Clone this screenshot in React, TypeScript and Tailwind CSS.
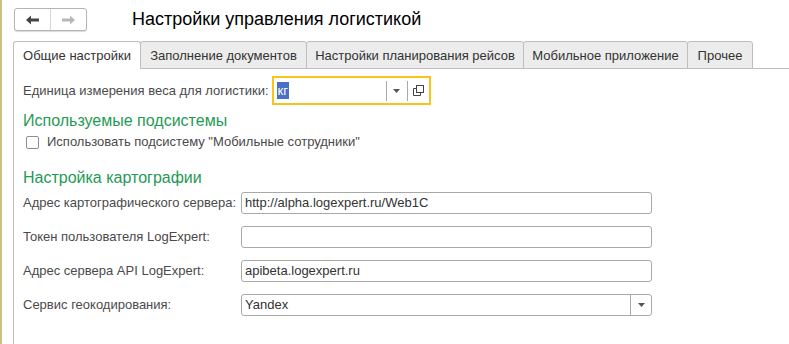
import React from "react";

const font = { fontFamily: '"Liberation Sans", Arial, sans-serif' };

function Field({ label, value, select }: { label: string; value?: string; select?: boolean }) {
  return (
    <div className="flex h-[22px] items-center">
      <div className="w-[218px] shrink-0 text-[13px] text-[#4a4a4a]">{label}</div>
      <div className="flex h-[22px] w-[411px] items-center rounded-[3px] border border-[#a9a9a9] bg-white">
        <div className="flex-1 pl-[3px] text-[13px] text-[#333]">{value}</div>
        {select && (
          <div className="flex h-full w-[21px] items-center justify-center border-l border-[#a9a9a9]">
            <svg width="7" height="4" viewBox="0 0 7 4">
              <path d="M0 0h7L3.5 4z" fill="#555" />
            </svg>
          </div>
        )}
      </div>
    </div>
  );
}

export default function App() {
  const tabs = ["Общие настройки", "Заполнение документов", "Настройки планирования рейсов", "Мобильное приложение", "Прочее"];
  const widths = ["w-[128px]", "w-[167px]", "w-[218px]", "w-[165px]", "w-[66px]"];

  return (
    <div className="flex h-[344px] w-[789px] overflow-hidden bg-white" style={font}>
      <div className="w-[2px] shrink-0 bg-[#cdbf85]" />
      <div className="flex flex-1 flex-col pl-[11px]">
        {/* top bar */}
        <div className="flex h-[41px] items-start pt-[8px]">
          <div className="ml-[1px] flex h-[23px] w-[73px] rounded-[3px] border border-[#b5b5b5] bg-white shadow-[0_1px_1px_rgba(0,0,0,0.15)]">
            <div className="flex w-[36px] items-center justify-center border-r border-[#d6d6d6]">
              <svg width="13" height="10" viewBox="0 0 13 10">
                <path d="M0 5L5 0.5V3.5H13V6.5H5V9.5Z" fill="#444" />
              </svg>
            </div>
            <div className="flex flex-1 items-center justify-center">
              <svg width="13" height="10" viewBox="0 0 13 10">
                <path d="M13 5L8 0.5V3.5H0V6.5H8V9.5Z" fill="#b8b8b8" />
              </svg>
            </div>
          </div>
          <div className="ml-[45px] mt-[-1px] text-[18px] leading-[24px] text-black">Настройки управления логистикой</div>
        </div>

        {/* tabs */}
        <div className="flex h-[28px] items-end">
          {tabs.map((t, i) => (
            <div
              key={t}
              className={`${widths[i]} flex h-[28px] shrink-0 items-center justify-center rounded-t-[3px] border border-[#bdbdbd] pt-[1px] text-[13px] text-[#333] ${
                i === 0 ? "border-b-white bg-white" : "-ml-px bg-[#ececec]"
              }`}
            >
              {t}
            </div>
          ))}
          <div className="flex-1 border-b border-[#bdbdbd]" />
        </div>

        {/* panel */}
        <div className="-mt-px flex flex-1 flex-col border-l border-[#bdbdbd] pl-[9px]">
          <div className="mt-[8px] flex h-[29px] items-center">
            <div className="text-[13px] text-[#4a4a4a]">Единица измерения веса для логистики:</div>
            <div className="ml-[3px] flex h-[29px] w-[159px] items-center border-2 border-[#f6c41d] bg-white">
              <div className="flex flex-1 items-center pl-[3px]">
                <span className="bg-[#4a6fc8] px-[1px] text-[13px] leading-[17px] text-white">кг</span>
              </div>
              <div className="h-[20px] w-px bg-[#a9a9a9]" />
              <div className="flex w-[20px] items-center justify-center">
                <svg width="7" height="4" viewBox="0 0 7 4">
                  <path d="M0 0h7L3.5 4z" fill="#555" />
                </svg>
              </div>
              <div className="h-[20px] w-px bg-[#a9a9a9]" />
              <div className="flex w-[21px] items-center justify-center">
                <svg width="11" height="11" viewBox="0 0 11 11" fill="none" stroke="#444" strokeWidth="1">
                  <rect x="3.5" y="0.5" width="7" height="7" />
                  <path d="M3.5 3.5H0.5V10.5H7.5V7.5" />
                </svg>
              </div>
            </div>
          </div>

          <div className="mt-[6px] text-[16px] leading-[20px] text-[#1f9a55]">Используемые подсистемы</div>
          <div className="mt-[2px] flex h-[18px] items-center">
            <div className="ml-[3px] h-[13px] w-[13px] rounded-[2px] border border-[#8f8f8f] bg-white" />
            <div className="ml-[8px] text-[13px] text-[#4a4a4a]">Использовать подсистему "Мобильные сотрудники"</div>
          </div>

          <div className="mt-[17px] text-[16px] leading-[20px] text-[#1f9a55]">Настройка картографии</div>
          <div className="mt-[4px] flex flex-col gap-[12px]">
            <Field label="Адрес картографического сервера:" value="http://alpha.logexpert.ru/Web1C" />
            <Field label="Токен пользователя LogExpert:" />
            <Field label="Адрес сервера API LogExpert:" value="apibeta.logexpert.ru" />
            <Field label="Сервис геокодирования:" value="Yandex" select />
          </div>
        </div>
      </div>
    </div>
  );
}
